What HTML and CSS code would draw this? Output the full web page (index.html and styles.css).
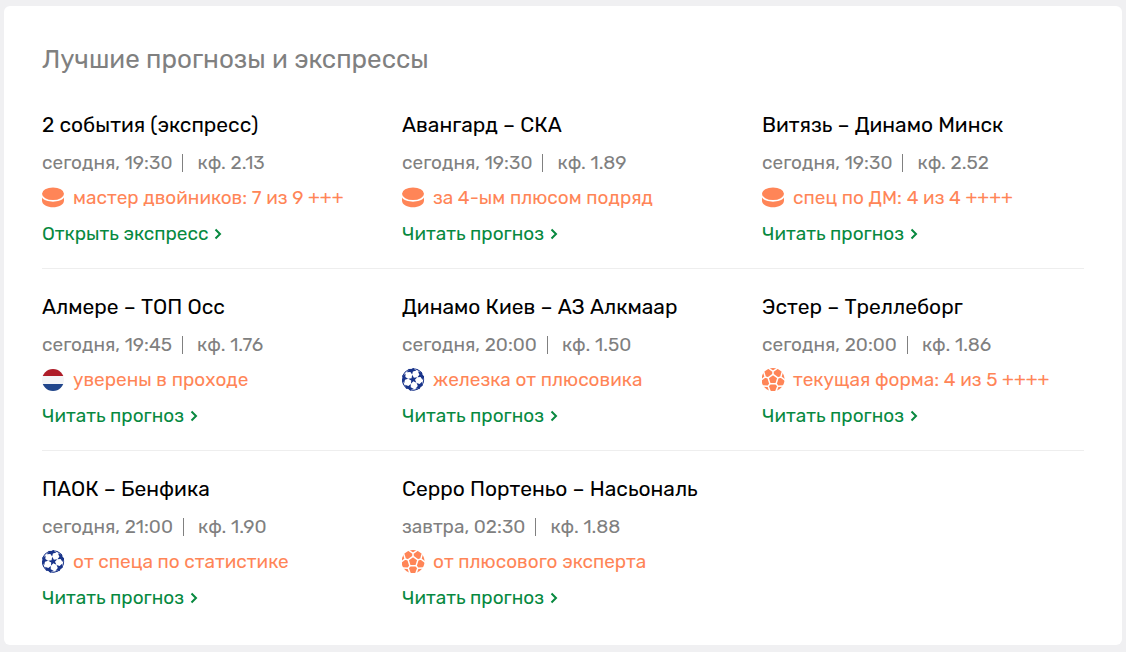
FILE: index.html
```
<!DOCTYPE html>
<html lang="ru">
<head>
<meta charset="utf-8">
<meta name="viewport" content="width=device-width, initial-scale=1">
<title>Лучшие прогнозы и экспрессы</title>
<link rel="stylesheet" href="styles.css">
</head>
<body>
<svg class="sprite" aria-hidden="true">
  <clipPath id="disc"><circle cx="11" cy="12" r="11"/></clipPath>
  <clipPath id="round"><circle cx="11" cy="11.500" r="11.500"/></clipPath>
  <path id="star" d="M0-4.800L1.200-1.500 4.600-1.500 1.900.6 2.800 3.900 0 1.900-2.800 3.900-1.900.6-4.600-1.500-1.200-1.500z"/>
  <path id="outer-star" d="M0-5L1.300-7.900 5-8.200 2.600-10.200 3-11.500 0-10.700-3-11.500-2.600-10.200-5-8.200-1.300-7.900z"/>
  <path id="seam" d="M0-5.200V-8.200M-4.800-11.500L0-8.200 4.800-11.500"/>
  <symbol id="puck" viewBox="0 0 23 24">
    <ellipse cx="11" cy="7.800" rx="11" ry="6.300" fill="#ff8557"/>
    <path d="M0 11.500C3 17 19 17 22 11.500V14.500C22 23.500 0 23.500 0 14.500Z" fill="#ff8557"/>
  </symbol>
  <symbol id="nl" viewBox="0 0 23 24">
    <g clip-path="url(#disc)">
      <path fill="#f4f5f7" d="M0 0h24v24H0z"/>
      <path fill="#ae1c28" d="M0 0h24v8H0z"/>
      <path fill="#21468b" d="M0 16h24v8H0z"/>
    </g>
  </symbol>
  <symbol id="ucl" viewBox="0 0 23 24">
    <g clip-path="url(#round)">
      <g fill="#19348a" transform="translate(11 11.500) rotate(-10)">
        <circle r="10.700" fill="none" stroke="#19348a" stroke-width="1" stroke-dasharray="11 2.445" stroke-dashoffset="2"/>
        <use href="#star"/>
        <use href="#outer-star"/>
        <use href="#outer-star" transform="rotate(72)"/>
        <use href="#outer-star" transform="rotate(144)"/>
        <use href="#outer-star" transform="rotate(216)"/>
        <use href="#outer-star" transform="rotate(288)"/>
      </g>
    </g>
  </symbol>
  <symbol id="ball" viewBox="0 0 23 24">
    <circle cx="11" cy="11.500" r="11.500" fill="#ff8557"/>
    <g fill="none" stroke="#fff" stroke-width="1.500" stroke-linejoin="round" transform="translate(11 11.500)">
      <path d="M0-5.200L4.900-1.600 3.100 4.200H-3.100L-4.900-1.600z"/>
      <use href="#seam"/>
      <use href="#seam" transform="rotate(72)"/>
      <use href="#seam" transform="rotate(144)"/>
      <use href="#seam" transform="rotate(216)"/>
      <use href="#seam" transform="rotate(288)"/>
    </g>
  </symbol>
  <symbol id="chevron" viewBox="0 0 8 12">
    <path d="M1.500 1.500L6 6l-4.500 4.500" fill="none" stroke="#07893f" stroke-width="2"/>
  </symbol>
</svg>
<main class="card">
  <h2 class="heading">Лучшие прогнозы и экспрессы</h2>
  <div class="row">
    <article class="tip">
      <h3 class="title">2 события (экспресс)</h3>
      <p class="meta"><span>сегодня, 19:30</span><span class="odds">кф. 2.13</span></p>
      <p class="note"><svg class="icon"><use href="#puck"/></svg>мастер двойников: 7 из 9 +++</p>
      <a class="more" href="#">Открыть экспресс<svg class="arrow"><use href="#chevron"/></svg></a>
    </article>
    <article class="tip">
      <h3 class="title">Авангард – СКА</h3>
      <p class="meta"><span>сегодня, 19:30</span><span class="odds">кф. 1.89</span></p>
      <p class="note"><svg class="icon"><use href="#puck"/></svg>за 4-ым плюсом подряд</p>
      <a class="more" href="#">Читать прогноз<svg class="arrow"><use href="#chevron"/></svg></a>
    </article>
    <article class="tip">
      <h3 class="title">Витязь – Динамо Минск</h3>
      <p class="meta"><span>сегодня, 19:30</span><span class="odds">кф. 2.52</span></p>
      <p class="note"><svg class="icon"><use href="#puck"/></svg>спец по ДМ: 4 из 4 ++++</p>
      <a class="more" href="#">Читать прогноз<svg class="arrow"><use href="#chevron"/></svg></a>
    </article>
  </div>
  <div class="row">
    <article class="tip">
      <h3 class="title">Алмере – ТОП Осс</h3>
      <p class="meta"><span>сегодня, 19:45</span><span class="odds">кф. 1.76</span></p>
      <p class="note"><svg class="icon"><use href="#nl"/></svg>уверены в проходе</p>
      <a class="more" href="#">Читать прогноз<svg class="arrow"><use href="#chevron"/></svg></a>
    </article>
    <article class="tip">
      <h3 class="title">Динамо Киев – АЗ Алкмаар</h3>
      <p class="meta"><span>сегодня, 20:00</span><span class="odds">кф. 1.50</span></p>
      <p class="note"><svg class="icon"><use href="#ucl"/></svg>железка от плюсовика</p>
      <a class="more" href="#">Читать прогноз<svg class="arrow"><use href="#chevron"/></svg></a>
    </article>
    <article class="tip">
      <h3 class="title">Эстер – Треллеборг</h3>
      <p class="meta"><span>сегодня, 20:00</span><span class="odds">кф. 1.86</span></p>
      <p class="note"><svg class="icon"><use href="#ball"/></svg>текущая форма: 4 из 5 ++++</p>
      <a class="more" href="#">Читать прогноз<svg class="arrow"><use href="#chevron"/></svg></a>
    </article>
  </div>
  <div class="row">
    <article class="tip">
      <h3 class="title">ПАОК – Бенфика</h3>
      <p class="meta"><span>сегодня, 21:00</span><span class="odds">кф. 1.90</span></p>
      <p class="note"><svg class="icon"><use href="#ucl"/></svg>от спеца по статистике</p>
      <a class="more" href="#">Читать прогноз<svg class="arrow"><use href="#chevron"/></svg></a>
    </article>
    <article class="tip">
      <h3 class="title">Серро Портеньо – Насьональ</h3>
      <p class="meta"><span>завтра, 02:30</span><span class="odds">кф. 1.88</span></p>
      <p class="note"><svg class="icon"><use href="#ball"/></svg>от плюсового эксперта</p>
      <a class="more" href="#">Читать прогноз<svg class="arrow"><use href="#chevron"/></svg></a>
    </article>
  </div>
</main>
</body>
</html>
```
FILE: styles.css
```
* {
  box-sizing: border-box;
}

body {
  margin: 0;
  padding: 6px 4px;
  background: #f0f0f2;
  font-family: Rubik, Roboto, "Noto Sans", sans-serif;
  font-size: 19px;
  font-weight: 400;
  line-height: 24px;
  color: #808080;
}

.sprite {
  position: absolute;
  width: 0;
  height: 0;
}

.card {
  padding: 38px 38px 35px;
  background: #fff;
  border-radius: 6px;
}

.heading,
.title,
.meta,
.note {
  margin: 0;
  font-weight: inherit;
}

.heading {
  margin-bottom: 11px;
  font-size: 26px;
  line-height: 32px;
}

.row {
  display: grid;
  grid-template-columns: repeat(3, minmax(0, 1fr));
  column-gap: 38px;
  padding: 25px 0 22px;
  border-bottom: 1px solid #eee;
}

.row:last-child {
  padding-bottom: 0;
  border-bottom: 0;
}

.tip {
  display: flex;
  flex-direction: column;
  align-items: flex-start;
  white-space: nowrap;
}

.title {
  margin-bottom: 13px;
  font-size: 21px;
  line-height: 26px;
  color: #000;
}

.meta,
.note,
.more {
  display: flex;
  align-items: center;
}

.meta {
  margin-bottom: 11px;
}

.note {
  gap: 8px;
  margin-bottom: 12px;
  color: #ff8557;
}

.odds {
  display: flex;
  align-items: center;
}

.odds::before {
  content: "";
  width: 1px;
  height: 18px;
  margin: 0 14px 0 10px;
  background: #808080;
}

.icon {
  width: 23px;
  height: 24px;
  flex: none;
}

.more {
  gap: 6px;
  color: #07893f;
  text-decoration: none;
}

.arrow {
  width: 8px;
  height: 12px;
}
```
